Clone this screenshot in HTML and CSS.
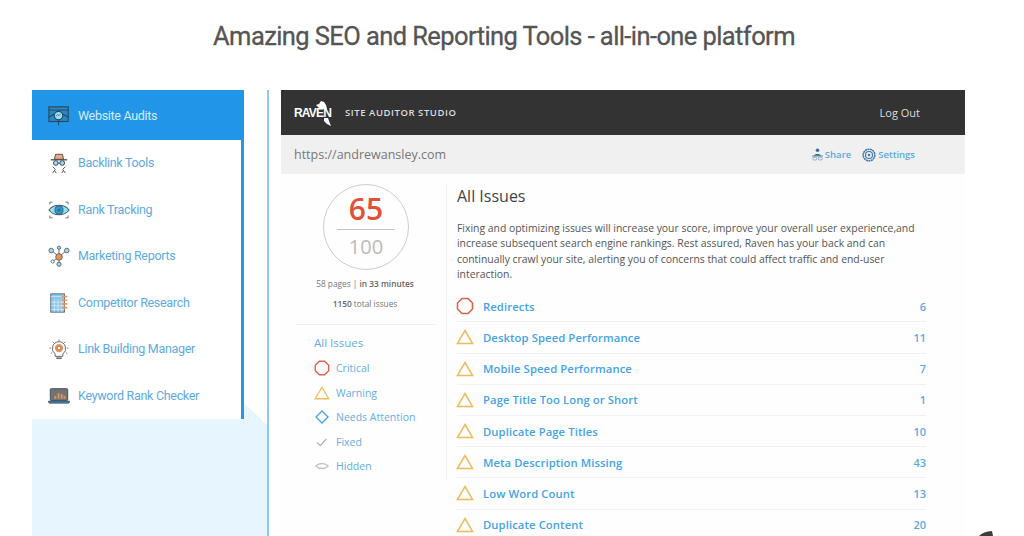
FILE: index.html
```html
<!DOCTYPE html>
<html lang="en">
<head>
<meta charset="utf-8">
<title>Amazing SEO and Reporting Tools</title>
<link rel="stylesheet" href="styles.css">
</head>
<body>
<svg class="defs" width="0" height="0" aria-hidden="true">
  <symbol id="oct" viewBox="0 0 18 18"><path d="M6 1.500h6L16.500 6v6L12 16.500H6L1.500 12V6z" fill="none" stroke="#e0614c" stroke-width="1.600"/></symbol>
  <symbol id="tri" viewBox="0 0 18 18"><path d="M9 2.500L16.600 15.500H1.400z" fill="none" stroke="#eebc5e" stroke-width="1.500"/></symbol>
  <symbol id="dia" viewBox="0 0 18 18"><path d="M9 2.200L15.800 9 9 15.800 2.200 9z" fill="none" stroke="#45a5e2" stroke-width="1.400"/></symbol>
  <symbol id="chk" viewBox="0 0 18 18"><path d="M3.500 9.800L7 13 14 5.500" fill="none" stroke="#a3a3a3" stroke-width="1.200"/></symbol>
  <symbol id="eye" viewBox="0 0 18 18"><path d="M2.200 9C5.500 5.200 12.500 5.200 15.800 9 12.500 12.800 5.500 12.800 2.200 9z" fill="none" stroke="#c4c4c4" stroke-width="1.500"/></symbol>
</svg>

<h1 class="title">Amazing SEO and Reporting Tools - all-in-one platform</h1>

<main class="stage">
  <aside class="rail">
    <nav class="tools">
      <a class="tool tool-on">
        <svg class="ticon" viewBox="0 0 24 24"><rect x="1" y="2" width="21" height="16" fill="#2a86c4" stroke="#27485f" stroke-width="1.200"/><path d="M1 5.500h21" stroke="#27485f"/><circle cx="11.500" cy="11.500" r="4.600" fill="#9bdcf5" stroke="#27485f" stroke-width="1.200"/><path d="M8.800 12l1.800-1.600 1.400 1.300 2-2" fill="none" stroke="#2a86c4"/><path d="M1 13l6-3M22 13l-6-3M11.500 16v6" stroke="#27485f" stroke-width="1.200"/></svg>
        <span>Website Audits</span>
      </a>
      <a class="tool">
        <svg class="ticon" viewBox="0 0 24 24"><path d="M7 8l1.200-5.500h7.600L17 8z" fill="#f0a878" stroke="#4b4b4b"/><path d="M3 8.500h18" stroke="#4b4b4b" stroke-width="1.400"/><circle cx="8.500" cy="12" r="2.600" fill="#9fd6ee" stroke="#37474f"/><circle cx="15.500" cy="12" r="2.600" fill="#9fd6ee" stroke="#37474f"/><path d="M11 12h2M5 23l3-4-3-3M19 23l-3-4 3-3M9 23l-2-3M15 23l2-3" fill="none" stroke="#4b4b4b"/></svg>
        <span>Backlink Tools</span>
      </a>
      <a class="tool">
        <svg class="ticon" viewBox="0 0 24 24"><path d="M1 12C6 5 18 5 23 12 18 19 6 19 1 12z" fill="#8fe0f0" stroke="#4b5a63" stroke-width="1.100"/><circle cx="12" cy="12" r="4.400" fill="#2f9bd0" stroke="#31566d"/><circle cx="12" cy="12" r="1.700" fill="#1f6f9d"/><path d="M2 6V3.500h3M19 3.500h3V6M2 18v2.500h3M19 20.500h3V18" fill="none" stroke="#5f6a70"/></svg>
        <span>Rank Tracking</span>
      </a>
      <a class="tool">
        <svg class="ticon" viewBox="0 0 24 24"><path d="M4 6l8 7 8-7M12 3v10M12 13v8M5 18l7-5" stroke="#55666f" fill="none"/><circle cx="12" cy="13" r="3.600" fill="#ef9350" stroke="#55666f"/><circle cx="3.500" cy="6" r="2.500" fill="#a8d5e8" stroke="#55666f"/><circle cx="12" cy="3" r="1.800" fill="#a8d5e8" stroke="#55666f"/><circle cx="20.500" cy="6" r="2.500" fill="#a8d5e8" stroke="#55666f"/><circle cx="12" cy="21" r="2.300" fill="#a8d5e8" stroke="#55666f"/><circle cx="5" cy="18" r="1.700" fill="#fff" stroke="#55666f"/></svg>
        <span>Marketing Reports</span>
      </a>
      <a class="tool">
        <svg class="ticon" viewBox="0 0 24 24"><rect x="3" y="2" width="15" height="20" fill="#8cc7ec" stroke="#5a6a72"/><path d="M3 5h15M7 8v14M11 8v14M15 8v14M3 11h15M3 15h15M3 19h15" stroke="#e4f3fb" stroke-width=".7"/><path d="M15 5h6M15 9h6M15 13h6M15 17h6" stroke="#ef9350" stroke-width="1.800"/></svg>
        <span>Competitor Research</span>
      </a>
      <a class="tool">
        <svg class="ticon" viewBox="0 0 24 24"><path d="M12 1.500v2M5 4l1.400 1.500M19 4l-1.400 1.500M1.500 11h2M20.500 11h2M3 17l1.500-1M21 17l-1.500-1" stroke="#7a7a7a"/><path d="M12 4a7.500 7.500 0 0 0-4.200 13.500V20h8.400v-2.500A7.500 7.500 0 0 0 12 4z" fill="#fdfdfd" stroke="#5d5d5d"/><circle cx="12" cy="11" r="4.500" fill="#ef9350"/><circle cx="12" cy="11" r="2" fill="#fff" stroke="#5d5d5d" stroke-width=".7"/><path d="M9 21h6v2H9z" fill="#7a7a7a"/></svg>
        <span>Link Building Manager</span>
      </a>
      <a class="tool">
        <svg class="ticon" viewBox="0 0 24 24"><rect x="2.500" y="4" width="19" height="13" rx="1" fill="#6f7478" stroke="#3e4a52"/><path d="M7 15v-3h2v3zM10.500 15V9h2v6zM14 15v-5h2v5zM17 15v-3h2v3z" fill="#ef9350"/><path d="M0.500 17.500h23v1.500l-1 1H1.500l-1-1z" fill="#3f7da3" stroke="#37474f" stroke-width=".6"/></svg>
        <span>Keyword Rank Checker</span>
      </a>
    </nav>
    <div class="rail-foot"></div>
  </aside>

  <section class="app">
    <header class="bar">
      <div class="logo">
        <svg class="logo-bird" viewBox="0 0 16 26"><path d="M1 5l3-1 2-3 3 1 2 3 1 4H5zM9 18h4l1 3 2 5-4-2-3-3z" fill="#fff"/></svg>
        <span class="logo-word">RAVEN</span>
      </div>
      <span class="bar-name">SITE AUDITOR STUDIO</span>
      <span class="bar-out">Log Out</span>
    </header>
    <div class="sub">
      <span class="url">https://andrewansley.com</span>
      <span class="sub-actions">
        <a class="act"><svg class="act-i" viewBox="0 0 14 16"><circle cx="7" cy="2.600" r="2.300" fill="#38709c"/><path d="M2.500 9.500c0-2.800 9-2.800 9 0z" fill="#38709c"/><path d="M0 10h14" stroke="#38709c"/><rect x="1" y="11.500" width="5" height="3.500" rx="1.500" fill="none" stroke="#7d9db4"/><rect x="8" y="11.500" width="5" height="3.500" rx="1.500" fill="none" stroke="#7d9db4"/></svg>Share</a>
        <a class="act"><svg class="act-i act-gear" viewBox="0 0 14 14"><circle cx="7" cy="7" r="5.800" fill="none" stroke="#3c7aa8" stroke-width="1.600" stroke-dasharray="2 .5"/><circle cx="7" cy="7" r="3.500" fill="none" stroke="#3c7aa8" stroke-width="1.100"/><circle cx="7" cy="7" r="1.300" fill="#3c7aa8"/></svg>Settings</a>
      </span>
    </div>
    <div class="report">
      <aside class="side">
        <div class="dial">
          <span class="dial-score">65</span>
          <span class="dial-max">100</span>
        </div>
        <p class="stat">58 pages | <b>in 33 minutes</b></p>
        <p class="stat stat-2"><b>1150</b> total issues</p>
        <ul class="filters">
          <li class="f-all">All Issues</li>
          <li><svg class="f-i"><use href="#oct"/></svg>Critical</li>
          <li><svg class="f-i"><use href="#tri"/></svg>Warning</li>
          <li><svg class="f-i"><use href="#dia"/></svg>Needs Attention</li>
          <li><svg class="f-i"><use href="#chk"/></svg>Fixed</li>
          <li><svg class="f-i"><use href="#eye"/></svg>Hidden</li>
        </ul>
      </aside>
      <div class="issues">
        <h2 class="issues-h">All Issues</h2>
        <p class="issues-p">Fixing and optimizing issues will increase your score, improve your overall user experience,and increase subsequent search engine rankings. Rest assured, Raven has your back and can continually crawl your site, alerting you of concerns that could affect traffic and end-user interaction.</p>
        <ul class="rows">
          <li class="row"><svg class="row-i"><use href="#oct"/></svg><span class="row-t">Redirects</span><span class="row-n">6</span></li>
          <li class="row"><svg class="row-i"><use href="#tri"/></svg><span class="row-t">Desktop Speed Performance</span><span class="row-n">11</span></li>
          <li class="row"><svg class="row-i"><use href="#tri"/></svg><span class="row-t">Mobile Speed Performance</span><span class="row-n">7</span></li>
          <li class="row"><svg class="row-i"><use href="#tri"/></svg><span class="row-t">Page Title Too Long or Short</span><span class="row-n">1</span></li>
          <li class="row"><svg class="row-i"><use href="#tri"/></svg><span class="row-t">Duplicate Page Titles</span><span class="row-n">10</span></li>
          <li class="row"><svg class="row-i"><use href="#tri"/></svg><span class="row-t">Meta Description Missing</span><span class="row-n">43</span></li>
          <li class="row"><svg class="row-i"><use href="#tri"/></svg><span class="row-t">Low Word Count</span><span class="row-n">13</span></li>
          <li class="row"><svg class="row-i"><use href="#tri"/></svg><span class="row-t">Duplicate Content</span><span class="row-n">20</span></li>
        </ul>
      </div>
    </div>
  </section>
</main>
<svg class="corner" viewBox="0 0 14 5"><path d="M0 5C3 2 7 .5 13 0l1 5z" fill="#3d3d3d"/></svg>
</body>
</html>
```

FILE: styles.css
```css
* { box-sizing: border-box; }
html, body { margin: 0; height: 100%; overflow: hidden; background: #fff; }
body { position: relative; font-family: "Open Sans", "Noto Sans", sans-serif; color: #555; }
.defs { position: absolute; }
p, ul, h1, h2 { margin: 0; padding: 0; }
ul { list-style: none; }

.title {
  height: 90px;
  padding: 19px 16px 0 0;
  text-align: center;
  font: 400 25.500px/34px Roboto, sans-serif;
  -webkit-text-stroke: 0.3px #555;
  letter-spacing: -0.59px;
  color: #555;
}

.stage { display: flex; height: 446px; padding-left: 32px; }

.rail {
  width: 237px;
  flex: none;
  display: flex;
  flex-direction: column;
  border-right: 2px solid #8fc9ee;
  background: #fff;
}
.tools {
  width: 212px;
  height: 329px;
  flex: none;
  border-right: 3px solid #2b95e4;
  display: flex;
  flex-direction: column;
}
.tool {
  display: flex;
  align-items: center;
  gap: 8px;
  height: 46.500px;
  padding-left: 16px;
  font: 400 12.500px/18px Roboto, sans-serif;
  letter-spacing: -0.3px;
  color: #5eaae2;
}
.tool-on {
  height: 50px;
  width: 212px;
  margin-right: -3px;
  padding-top: 2px;
  background: #2196e8;
  color: #d4ecff;
  border-radius: 0 3px 0 0;
}
.ticon { width: 22px; height: 22px; flex: none; }
.rail-foot {
  flex: 1;
  margin-top: -16px;
  background: #e6f5fe;
  clip-path: polygon(0 16px, 212px 16px, 212px 0, 235px 22px, 235px 100%, 0 100%);
}

.app { width: 684px; margin-left: 12px; flex: none; background: #fefefe; }
.bar {
  height: 45px;
  background: #333;
  display: flex;
  align-items: center;
  padding-left: 13px;
  color: #ddd;
}
.logo { display: flex; align-items: center; width: 51px; position: relative; }
.logo-word { position: relative; font: 700 12px/14px "Liberation Sans", sans-serif; letter-spacing: -0.8px; color: #fff; }
.logo-bird { position: absolute; left: 21px; top: -6px; width: 16px; height: 26px; }
.bar-name { font-size: 9.500px; font-weight: 600; letter-spacing: 0.560px; color: #dcdcdc; }
.bar-out { margin-left: auto; padding-right: 45px; font-size: 11px; color: #ddd; }

.sub {
  height: 39px;
  background: #f0f0f0;
  display: flex;
  align-items: center;
  padding: 0 50px 0 13px;
}
.url { font-size: 12.500px; color: #777; }
.sub-actions { margin-left: auto; display: flex; gap: 11px; }
.act { display: flex; align-items: center; gap: 2px; font-size: 9.500px; font-weight: 600; color: #5aa9e0; }
.act-i { width: 11px; height: 13px; }
.act-gear { width: 14px; height: 14px; }

.report { display: flex; padding-top: 9px; }
.side { width: 166px; height: 297px; flex: none; border-right: 1px solid #f0f0f0; }
.dial {
  width: 86px;
  height: 86px;
  margin: 1px 0 0 42px;
  border: 1px solid #ccc;
  border-radius: 50%;
  display: flex;
  flex-direction: column;
  align-items: center;
}
.dial-score {
  width: 58px;
  height: 45px;
  padding-top: 7px;
  border-bottom: 1px solid #c4c4c4;
  text-align: center;
  font: 600 30px/34px "Open Sans", sans-serif;
  color: #e2503a;
}
.dial-max { padding-top: 2px; font: 400 20px/30px "Open Sans", sans-serif; color: #bbb; }
.stat { margin-top: 8px; text-align: center; font-size: 8.300px; line-height: 12px; color: #777; padding-left: 3px; }
.stat b { font-weight: 600; color: #666; }
.stat-2 { margin-top: 8px; }
.filters {
  margin: 14px 10px 0 15px;
  padding-top: 4px;
  border-top: 1px solid #f0f0f0;
  display: flex;
  flex-direction: column;
}
.filters li {
  display: flex;
  align-items: center;
  gap: 6px;
  height: 24.500px;
  padding-left: 18px;
  font-size: 10.500px;
  color: #66ade4;
}
.filters li.f-all { font-size: 11.500px; height: 27px; }
.f-i { width: 16px; height: 16px; flex: none; }

.issues { width: 469px; margin-left: 10px; flex: none; }
.issues-h { font: 400 16px/22px "Open Sans", sans-serif; color: #444; margin-top: 2px; }
.issues-p { margin-top: 14px; font-size: 10.400px; line-height: 15.300px; color: #555; }
.rows { margin-top: 9px; }
.row {
  display: flex;
  align-items: center;
  height: 31.200px;
  border-bottom: 1px solid #f1f1f1;
}
.row-i { width: 18px; height: 18px; flex: none; margin: 0 9px 0 -1px; }
.row-t { font-size: 11.250px; font-weight: 600; color: #45a3e5; letter-spacing: 0.100px; }
.row-n { margin-left: auto; font-size: 11px; font-weight: 600; color: #5aaae4; }

.corner { position: absolute; right: 31px; bottom: 0; width: 14px; height: 5px; }
```
